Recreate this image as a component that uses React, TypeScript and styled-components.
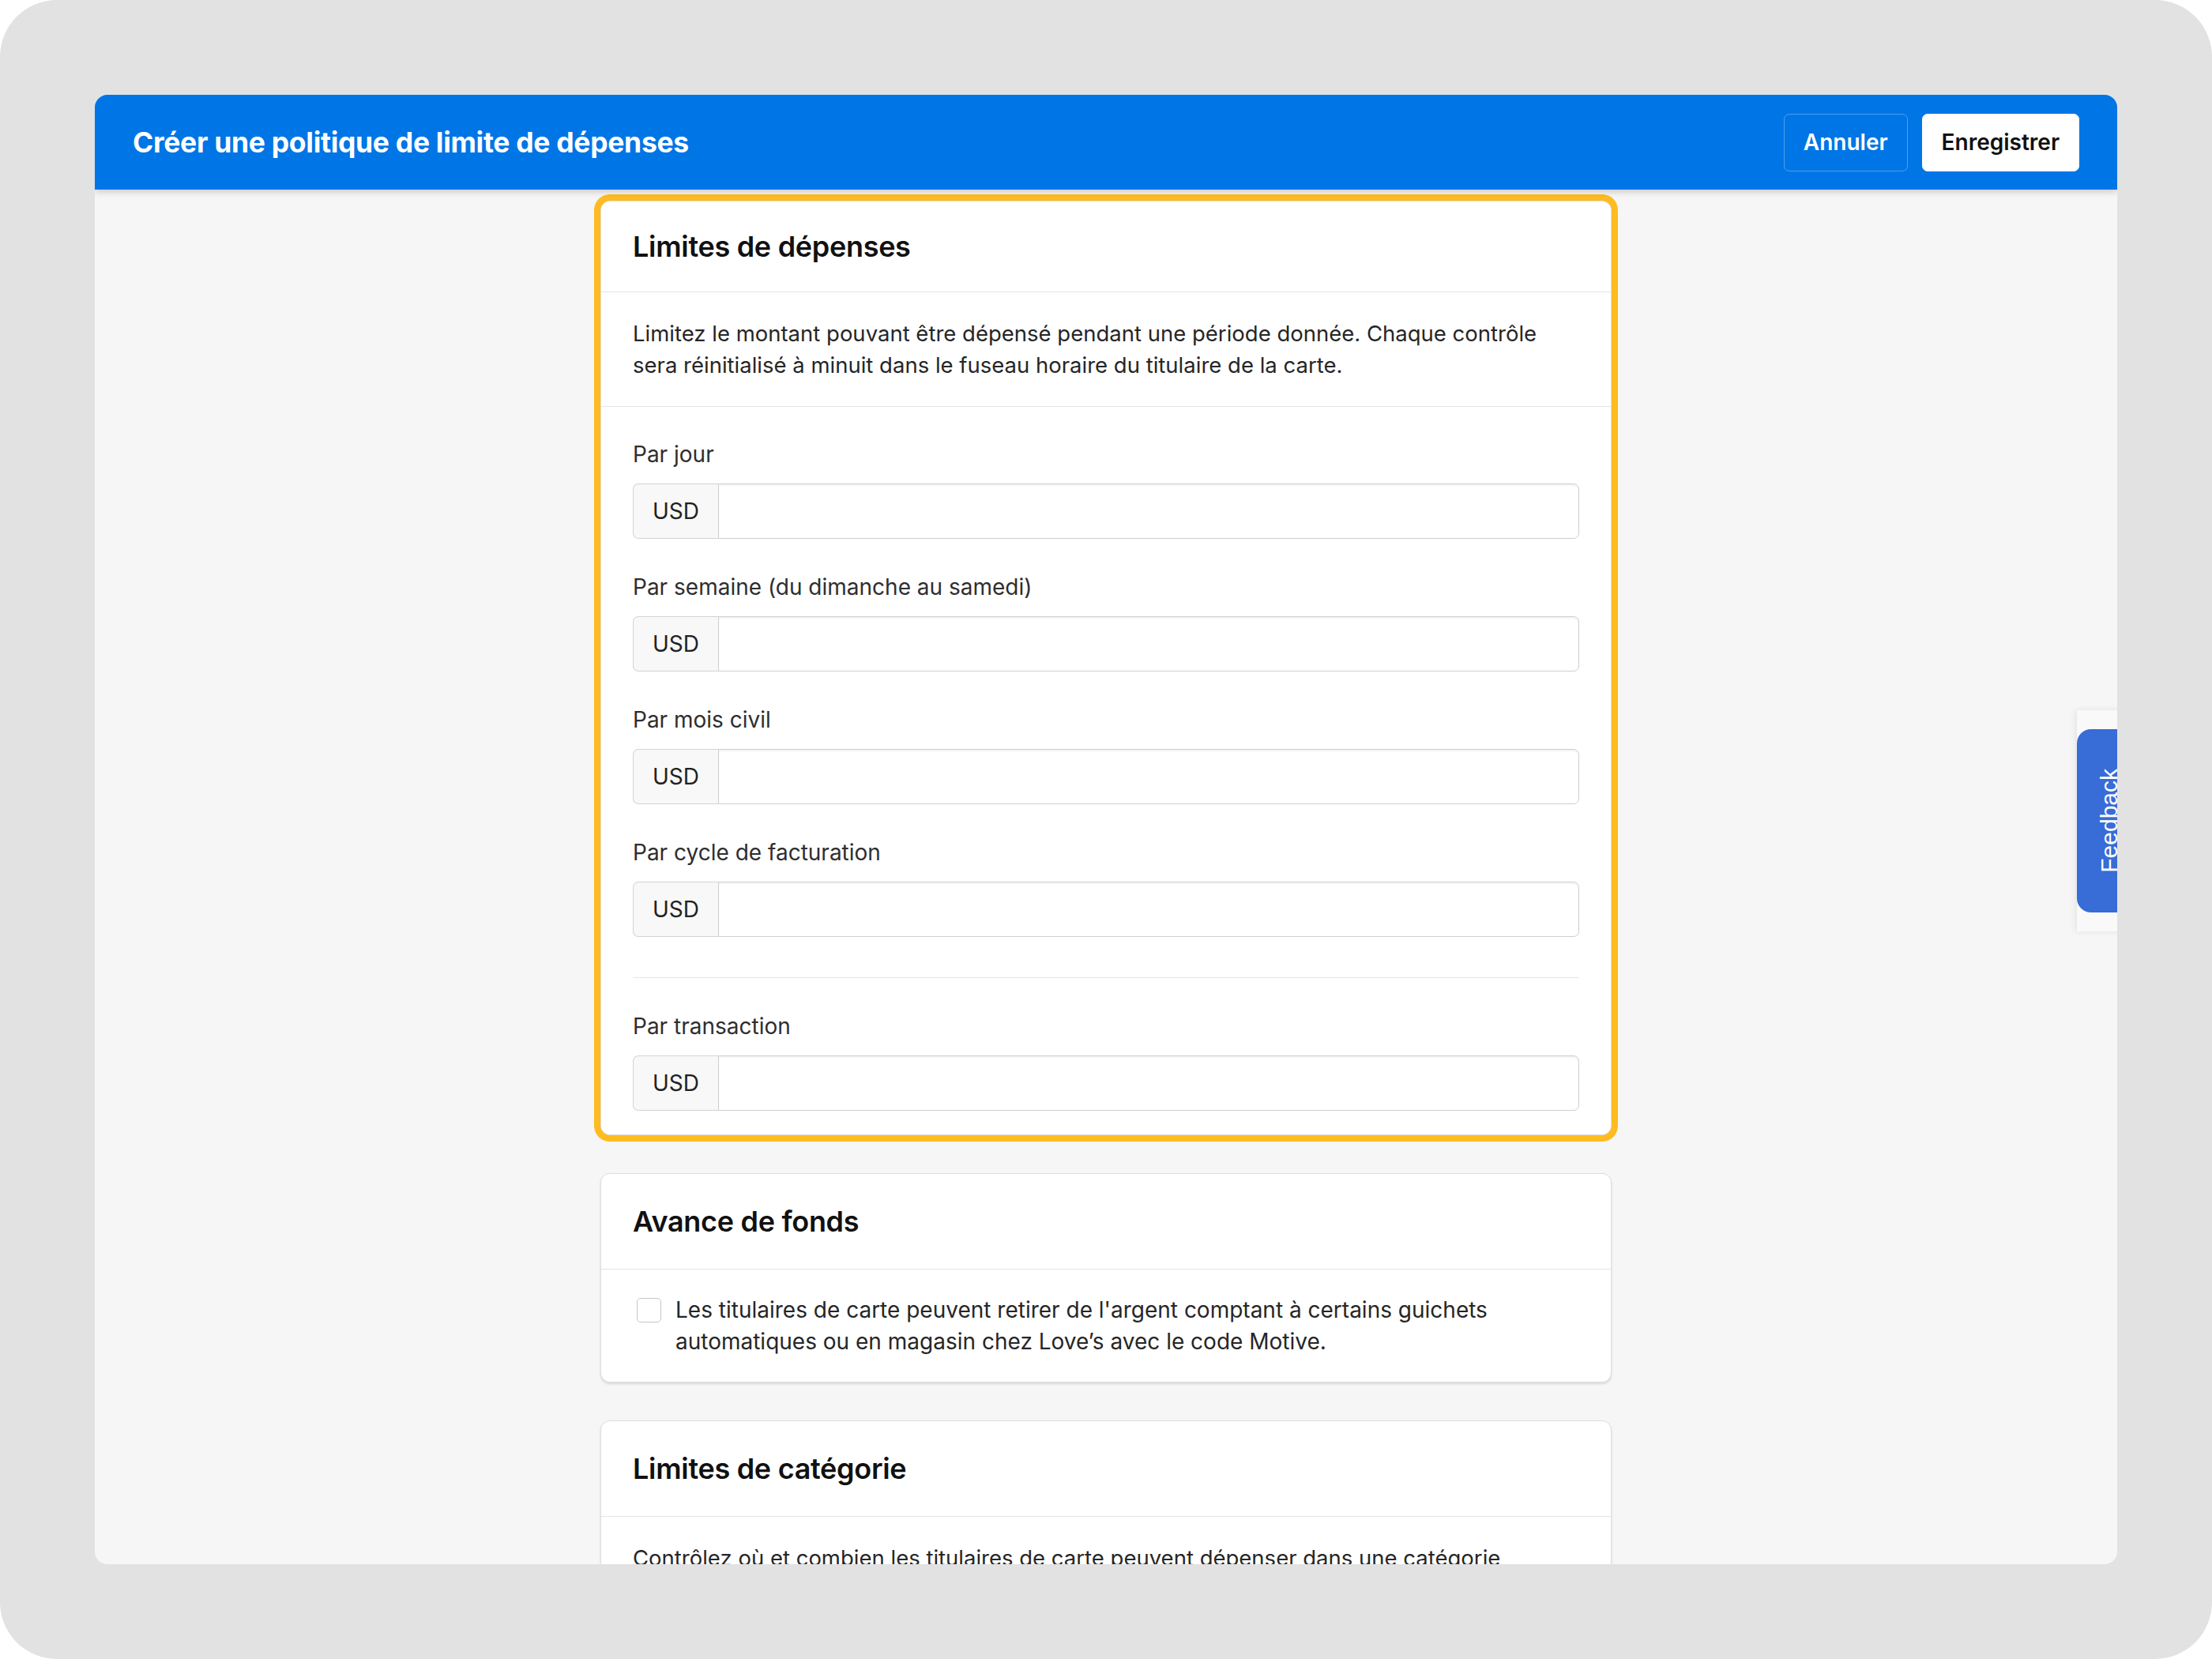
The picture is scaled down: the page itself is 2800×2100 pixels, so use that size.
import React from 'react';
import styled, { createGlobalStyle } from 'styled-components';

const GlobalStyles = createGlobalStyle`
  * {
    margin: 0;
    padding: 0;
    box-sizing: border-box;
  }

  html, body {
    background: #ffffff;
    font-family: Inter, "Noto Sans", "Liberation Sans", sans-serif;
    color: #1f1f1f;
  }
`;

const Frame = styled.div`
  width: 2800px;
  height: 2100px;
  padding: 120px;
  background: #e2e2e2;
  border-radius: 72px;
`;

const Window = styled.div`
  position: relative;
  display: flex;
  flex-direction: column;
  height: 100%;
  background: #f6f6f6;
  border-radius: 16px;
  overflow: hidden;
`;

const TopBar = styled.header`
  position: relative;
  z-index: 2;
  flex-shrink: 0;
  display: flex;
  align-items: center;
  justify-content: space-between;
  height: 120px;
  padding: 0 48px;
  background: #0075e6;
  box-shadow: 0 3px 8px rgba(0, 0, 0, 0.18);
`;

const PageTitle = styled.h1`
  font-size: 35.5px;
  font-weight: 700;
  letter-spacing: -0.3px;
  color: #ffffff;
`;

const Actions = styled.div`
  display: flex;
  gap: 18px;
`;

const Button = styled.button<{ $primary?: boolean }>`
  height: 73px;
  padding: 0 24px;
  border-radius: 7px;
  font-family: inherit;
  font-size: 28px;
  font-weight: 600;
  cursor: pointer;
  border: 1px solid ${p => (p.$primary ? '#ffffff' : 'rgba(255, 255, 255, 0.3)')};
  background: ${p => (p.$primary ? '#ffffff' : 'transparent')};
  color: ${p => (p.$primary ? '#111111' : '#ffffff')};
`;

const Content = styled.main`
  flex: 1;
  overflow: hidden;
  padding-top: 14px;
`;

const Column = styled.div`
  width: 1280px;
  margin: 0 auto;
  display: flex;
  flex-direction: column;
  gap: 48px;
`;

const Card = styled.section<{ $highlight?: boolean }>`
  background: #ffffff;
  border: 1px solid #dedede;
  border-radius: 12px;
  box-shadow: ${p =>
    p.$highlight ? '0 0 0 8px #ffbb1f' : '0 2px 3px rgba(0, 0, 0, 0.12)'};
`;

const CardHeader = styled.div<{ $tight?: boolean }>`
  padding: ${p => (p.$tight ? '37px 40px' : '40px 40px')};
  border-bottom: 1px solid #e4e4e4;
`;

const CardTitle = styled.h2`
  font-size: 36px;
  line-height: 40px;
  font-weight: 600;
  letter-spacing: -0.3px;
  color: #111111;
`;

const Description = styled.p`
  padding: 32px 40px;
  font-size: 27.5px;
  line-height: 40px;
  color: #262626;
  border-bottom: 1px solid #e4e4e4;
`;

const Fields = styled.div`
  display: flex;
  flex-direction: column;
  gap: 41px;
  padding: 40px 40px 30px;
`;

const Field = styled.div`
  display: flex;
  flex-direction: column;
  gap: 17px;
`;

const Label = styled.label`
  font-size: 28px;
  line-height: 40px;
  color: #2e2e2e;
`;

const InputGroup = styled.div`
  display: flex;
  height: 70px;
`;

const Addon = styled.span`
  display: flex;
  align-items: center;
  width: 108px;
  padding-left: 24px;
  font-size: 28px;
  color: #222222;
  background: #f8f8f8;
  border: 1px solid #d3d3d3;
  border-right: none;
  border-radius: 7px 0 0 7px;
`;

const AmountInput = styled.input`
  flex: 1;
  min-width: 0;
  font-family: inherit;
  font-size: 28px;
  padding: 0 20px;
  background: #ffffff;
  border: 1px solid #cfcfcf;
  border-radius: 0 7px 7px 0;
  box-shadow: inset 0 2px 2px rgba(0, 0, 0, 0.05);
  outline: none;
`;

const Divider = styled.hr`
  border: none;
  height: 1px;
  margin-top: 10px;
  background: #e6e6e6;
`;

const CheckRow = styled.label`
  display: flex;
  align-items: flex-start;
  gap: 18px;
  padding: 31px 40px 31px 45px;
  font-size: 28px;
  line-height: 40px;
  color: #262626;
`;

const CheckBox = styled.span`
  flex-shrink: 0;
  width: 31px;
  height: 31px;
  margin-top: 5px;
  background: #ffffff;
  border: 1.5px solid #c6c6c6;
  border-radius: 5px;
`;

const FeedbackTab = styled.div`
  position: absolute;
  top: 779px;
  right: -30px;
  width: 81px;
  padding: 24px 0;
  background: #f9f9f9;
  box-shadow: -2px 0 8px rgba(0, 0, 0, 0.08);
`;

const FeedbackButton = styled.div`
  display: flex;
  align-items: center;
  justify-content: center;
  width: 100%;
  height: 232px;
  background: #386cd6;
  border-radius: 18px 0 0 18px;
`;

const FeedbackText = styled.span`
  color: #ffffff;
  font-family: "Liberation Sans", Arial, sans-serif;
  font-size: 30px;
  line-height: 1;
  writing-mode: vertical-rl;
  transform: rotate(180deg);
`;

const limits = [
  'Par jour',
  'Par semaine (du dimanche au samedi)',
  'Par mois civil',
  'Par cycle de facturation',
];

function MoneyField({ label }: { label: string }) {
  return (
    <Field>
      <Label>{label}</Label>
      <InputGroup>
        <Addon>USD</Addon>
        <AmountInput type="text" />
      </InputGroup>
    </Field>
  );
}

export default function App() {
  return (
    <>
      <GlobalStyles />
      <Frame>
        <Window>
          <TopBar>
            <PageTitle>Créer une politique de limite de dépenses</PageTitle>
            <Actions>
              <Button>Annuler</Button>
              <Button $primary>Enregistrer</Button>
            </Actions>
          </TopBar>

          <Content>
            <Column>
              <Card $highlight>
                <CardHeader $tight>
                  <CardTitle>Limites de dépenses</CardTitle>
                </CardHeader>
                <Description>
                  Limitez le montant pouvant être dépensé pendant une période donnée. Chaque
                  contrôle sera réinitialisé à minuit dans le fuseau horaire du titulaire de la
                  carte.
                </Description>
                <Fields>
                  {limits.map(l => (
                    <MoneyField key={l} label={l} />
                  ))}
                  <Divider />
                  <MoneyField label="Par transaction" />
                </Fields>
              </Card>

              <Card>
                <CardHeader>
                  <CardTitle>Avance de fonds</CardTitle>
                </CardHeader>
                <CheckRow>
                  <CheckBox />
                  <span>
                    Les titulaires de carte peuvent retirer de l'argent comptant à certains
                    guichets automatiques ou en magasin chez Love’s avec le code Motive.
                  </span>
                </CheckRow>
              </Card>

              <Card>
                <CardHeader>
                  <CardTitle>Limites de catégorie</CardTitle>
                </CardHeader>
                <Description>
                  Contrôlez où et combien les titulaires de carte peuvent dépenser dans une
                  catégorie spécifique de marchands.
                </Description>
              </Card>
            </Column>
          </Content>

          <FeedbackTab>
            <FeedbackButton>
              <FeedbackText>Feedback</FeedbackText>
            </FeedbackButton>
          </FeedbackTab>
        </Window>
      </Frame>
    </>
  );
}
